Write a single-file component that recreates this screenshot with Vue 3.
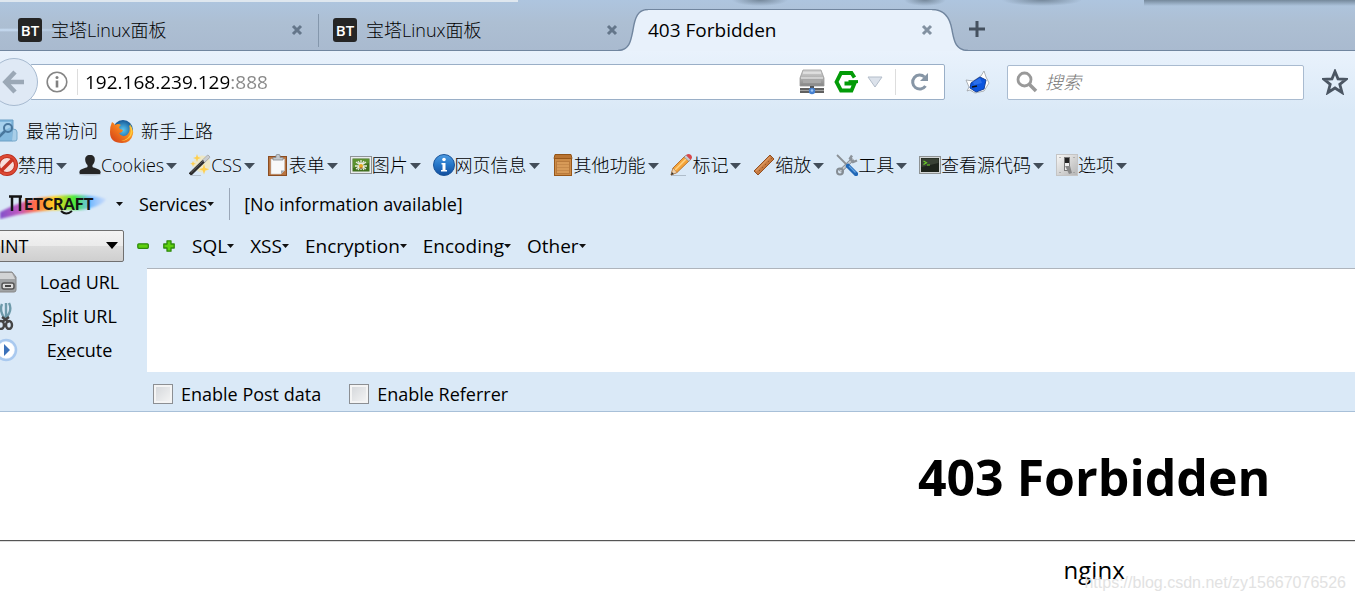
<script setup>
import { ref } from 'vue'

const address = ref('192.168.239.129:888')
const search = ref('')
const mode = ref('INT')
const payload = ref('')
const postData = ref(false)
const referrer = ref(false)

const tabs = ['宝塔Linux面板', '宝塔Linux面板']

const tools = [
  { label: '禁用', icon: '<circle cx="11" cy="11" r="9" fill="#f7dedb" stroke="#b72a1b" stroke-width="4"/><circle cx="11" cy="11" r="9" fill="none" stroke="#dd4a35" stroke-width="2.4"/><path d="M5 17 17 5" stroke="#c93423" stroke-width="3.6"/>' },
  { label: 'Cookies', icon: '<ellipse cx="11" cy="20.500" rx="11" ry="1" fill="#b9c5d1"/><path d="M11 1c3.500 0 5 2 4.800 5-.2 2.600-1.200 4-2.300 5v2c2 1.400 7.500 1.500 8 4.500.3 1.500 0 2.500-.8 2.500H1.300C.5 20 .200 19 .5 17.500 1 14.500 6.500 14.400 8.500 13v-2C7.400 10 6.400 8.600 6.200 6 6 3 7.500 1 11 1z" fill="#262626"/>' },
  { label: 'CSS', icon: '<circle cx="13" cy="10" r="8.500" fill="#ffe79a" opacity=".5"/><g fill="#ffcf4e"><path d="m8 0 1 3 3 1-3 1-1 3-1-3-3-1 3-1zM15 10l1.200 4 4 1.200-4 1.200-1.200 4-1.200-4-4-1.200 4-1.200zM4 7l.8 2 2 .8-2 .8L4 13l-.8-2.400-2-.8 2-.8z"/></g><path d="M1 20.500 20 2" stroke="#2d2d2d" stroke-width="3.400"/><path d="m14.500 7.300 5.500-5.300" stroke="#c9cdd1" stroke-width="3.400"/><path d="M2 18.500 15 6" stroke="#777" stroke-width=".7"/><path d="M2 21.500h10" stroke="#b6c2ce"/>' },
  { label: '表单', icon: '<rect x="1.500" y="2.500" width="18" height="19" fill="#b97440" stroke="#8a4d22"/><path d="M4 5h13.500v11.500L14 20H4z" fill="#f8f9fa" stroke="#c9c9c9" stroke-width=".6"/><path d="M17.500 16.500H14V20z" fill="#9fa5ab"/><path d="M6 6V3.500h3V1q2-1.500 4 0v2.500h3V6z" fill="#c3c8cd" stroke="#868b91" stroke-width=".8"/>' },
  { label: '图片', icon: '<rect x=".5" y="2.500" width="21" height="17" fill="#e9ebec" stroke="#8f9498"/><rect x="2.500" y="4.500" width="17" height="13" fill="#3f6f1c"/><path d="M3 5h16v4L3 14z" fill="#5c9130"/><g stroke="#e9eadf" stroke-width="1.300"><path d="m6 8 10 7M16 8 6 15M11 6v10M5 12h12M8 7l6 9M14 7l-6 9"/></g><circle cx="11" cy="12" r="2" fill="#e7aa20"/><path d="M9.500 14h3" stroke="#8c4f16"/>' },
  { label: '网页信息', icon: '<defs><linearGradient id="info" x1="0" y1="0" x2="0" y2="1"><stop stop-color="#4d9ce2"/><stop offset=".5" stop-color="#2475c7"/><stop offset="1" stop-color="#124d9c"/></linearGradient></defs><circle cx="11" cy="11" r="10.500" fill="url(#info)" stroke="#1a5499"/><circle cx="11" cy="5.500" r="1.800" fill="#fff"/><path d="M8.500 9h4v7h1.500v1.500H8V16h1.500v-5.500h-1z" fill="#fff"/>' },
  { label: '其他功能', icon: '<path d="M3 .5h16l1 4H2z" fill="#b87331" stroke="#935416"/><rect x="2.500" y="4.500" width="17" height="17" fill="#cb8b48" stroke="#985719"/><rect x="4.500" y="7.500" width="13" height="12" fill="#d79a58" stroke="#b97a3c"/><path d="M5 10.500h12M5 13.500h12M5 16.500h12" stroke="#c78a4b"/>' },
  { label: '标记', icon: '<path d="M1 21.500h15" stroke="#afbdca"/><path d="m1 21 2-7L15 2l5 4L7 18.500z" fill="#f4a43a" stroke="#a95f18" stroke-width=".8"/><path d="M5 16 17 4" stroke="#ffd282" stroke-width="1.600"/><path d="m3 14 4 4.500L1 21z" fill="#efd1ab" stroke="#9e6c3c" stroke-width=".5"/><path d="m1 21 .9-3 2 2z" fill="#333"/><path d="m14 3 2-2 5 4-2 2.500z" fill="#c7cbd0" stroke="#777" stroke-width=".5"/><path d="m16 1 2-1q4 0 4 4l-1.500 2z" fill="#d8484b"/>' },
  { label: '缩放', icon: '<path d="M1 17 17 1l4 4L5 21z" fill="#c67a40" stroke="#925022"/><path d="m3 17 14-14" stroke="#dc9860" stroke-width="1.400"/><path d="m7 17-1-1M10 14l-1-1M13 11l-1-1M16 8l-1-1M19 5l-1-1" stroke="#8d5028" stroke-width=".8"/>' },
  { label: '工具', icon: '<path d="M4 17.500 17 5" stroke="#7e858c" stroke-width="3.600"/><path d="M4 17.500 17 5" stroke="#c4c9ce" stroke-width="2"/><circle cx="4" cy="17.500" r="3" fill="none" stroke="#858c93" stroke-width="2"/><path d="M16 1.500 14 4.500l3 3.500 4-1.500" fill="none" stroke="#8c9299" stroke-width="2.400"/><path d="m1 1 11 11" stroke="#8b9096" stroke-width="1.800"/><path d="m12 12 8 8" stroke="#2168b7" stroke-width="4.500" stroke-linecap="round"/><path d="m13 12 6.500 6.500" stroke="#66a3e0" stroke-width="1.200"/>' },
  { label: '查看源代码', icon: '<rect x=".5" y="2.500" width="21" height="17" fill="#d3d6d6" stroke="#8e9394"/><rect x="2" y="4" width="18" height="14" fill="#1f251d"/><path d="M2.500 4.500H19.500V9l-17 4z" fill="#394135"/><path d="m4.500 7 3 1.800-3 1.800M8 11h3" fill="none" stroke="#6bd026" stroke-width="1.200"/>' },
  { label: '选项', icon: '<defs><linearGradient id="plate" x1="0" y1="0" x2="1" y2="1"><stop stop-color="#f8f8f7"/><stop offset="1" stop-color="#b4b4b4"/></linearGradient></defs><rect x=".5" y=".5" width="21" height="21" fill="url(#plate)" stroke="#c5c5c5"/><rect x="8.500" y="3.500" width="5" height="13" fill="#eee" stroke="#777"/><rect x="9" y="4" width="4" height="5" fill="#222"/><path d="M9 12h5l2 7-3 1z" fill="#888"/><path d="M4 3v1M18 3v1M4 18v1M18 18v1" stroke="#888"/>' }
]

const hackMenus = ['SQL', 'XSS', 'Encryption', 'Encoding', 'Other']
</script>

<template>
  <div class="browser">
    <header class="tabstrip">
      <div v-for="(tab, i) in tabs" :key="i" class="tab">
        <span class="favicon">BT</span>
        <span class="tab-title">{{ tab }}</span>
        <button class="close" aria-label="关闭标签页">
          <svg width="12" height="12" viewBox="0 0 12 12"><path d="m2 2 8 8M10 2l-8 8" stroke="#64768a" stroke-width="3" /></svg>
        </button>
      </div>
      <div class="active-tab">
        <svg class="cap" width="30" height="42" viewBox="0 0 30 42">
          <path d="M0 42C12 42 13 31 15 21 17 8 20 .5 30 .5V42z" fill="#e8f1fb" />
          <path d="M0 41.500C12 41 13 31 15 21 17 8 20 .5 30 .5" fill="none" stroke="#71869f" stroke-width="1.400" />
        </svg>
        <div class="active-body">
          <span class="tab-title">403 Forbidden</span>
          <button class="close" aria-label="关闭标签页">
            <svg width="12" height="12" viewBox="0 0 12 12"><path d="m2 2 8 8M10 2l-8 8" stroke="#8291a1" stroke-width="3" /></svg>
          </button>
        </div>
        <svg class="cap" width="36" height="42" viewBox="0 0 36 42">
          <path d="M36 42C23 42 22 31 20 21 18 8 12 .5 0 .5V42z" fill="#e8f1fb" />
          <path d="M36 41.500C23 41 22 31 20 21 18 8 12 .5 0 .5" fill="none" stroke="#71869f" stroke-width="1.400" />
        </svg>
      </div>
      <button class="new-tab" aria-label="新建标签页">
        <svg width="16" height="16" viewBox="0 0 16 16"><path d="M8 0v16M0 8h16" stroke="#45515f" stroke-width="3" /></svg>
      </button>
    </header>

    <div class="chrome">
      <nav class="navbar">
        <button class="back" aria-label="后退">
          <svg width="24" height="26" viewBox="0 0 24 26"><path d="M13 3 3.500 13 13 23M4 13h18" fill="none" stroke="#9ba8b6" stroke-width="4.600" /></svg>
        </button>
        <div class="urlbar">
          <svg class="identity" width="22" height="22" viewBox="0 0 22 22">
            <circle cx="11" cy="11" r="9.800" fill="none" stroke="#858585" stroke-width="1.600" />
            <circle cx="11" cy="6.500" r="1.500" fill="#808080" /><path d="M11 9.500v7" stroke="#808080" stroke-width="2.600" />
          </svg>
          <input v-model="address" class="address" aria-label="地址" />
          <svg width="26" height="26" viewBox="0 0 26 26">
            <defs><linearGradient id="drive" x1="0" y1="0" x2="0" y2="1"><stop stop-color="#d8d8d8" /><stop offset="1" stop-color="#858585" /></linearGradient></defs>
            <path d="M4 1h18l3 8v8H1V9z" fill="url(#drive)" stroke="#999" stroke-width=".8" />
            <path d="M4 4h18M2 9h22" stroke="#f2f2f2" /><rect x="4" y="11" width="18" height="3" fill="#a9a9a9" />
            <path d="M1 19h24v5H1z" fill="#606060" /><path d="M1 21.500h24" stroke="#a2a2a2" /><path d="M11 17h4v3h-4z" fill="#555" />
            <circle cx="13" cy="22" r="3.200" fill="#4681d2" /><circle cx="13" cy="21.500" r="1.300" fill="#9bc5f4" />
          </svg>
          <svg width="24" height="24" viewBox="0 0 24 24">
            <path d="M20.500 7.500 17.500 3H7L2.500 12 7 20.500h10.500L20.500 13.500H10.500" fill="none" stroke="#039b08" stroke-width="3.800" />
            <path d="M14.500 11.600h9.500" stroke="#039b08" stroke-width="3" />
          </svg>
          <svg class="history" width="16" height="12" viewBox="0 0 16 12"><path d="M1 1h14L8 11z" fill="#dce2eb" stroke="#b3bdca" /></svg>
          <button class="reload" aria-label="刷新">
            <svg width="20" height="20" viewBox="0 0 20 20"><path d="M14.500 5A7 7 0 1 0 15.500 14" fill="none" stroke="#8796a6" stroke-width="3" /><path d="M18 1v8h-8z" fill="#8796a6" /></svg>
          </button>
        </div>
        <button class="addon" aria-label="扩展">
          <svg width="26" height="24" viewBox="0 0 26 24">
            <path d="m2 10 7 1 8-5 3-5 2 6 3 6-5 8-9 2-5-3-3 1 2-4z" fill="#fff" stroke="#9a9fa4" stroke-width=".8" />
            <path d="m7 13 9-6 6 3-2 9-8 3-6-4z" fill="#0b55df" stroke="#123f9b" /><path d="m9 12 7-4 2 5-8 2z" fill="#2a6fec" /><path d="m8 17 5-1" stroke="#111" stroke-width="1.600" />
          </svg>
        </button>
        <label class="search">
          <svg width="22" height="22" viewBox="0 0 22 22"><circle cx="8.500" cy="8.500" r="6.500" fill="none" stroke="#999" stroke-width="2.800" /><path d="m13.500 13.500 6.500 6.500" stroke="#999" stroke-width="3.600" /></svg>
          <input v-model="search" placeholder="搜索" aria-label="搜索" />
        </label>
        <button class="star" aria-label="添加书签">
          <svg width="26" height="26" viewBox="0 0 26 26"><path d="m13 2.500 3 7.300 8 .5-6.200 5 2.200 8.200-7-4.500-7 4.500 2.200-8.200L2 10.300l8-.5z" fill="none" stroke="#4b5663" stroke-width="2.800" /></svg>
        </button>
      </nav>

      <div class="bookmarks">
        <a href="#">
          <svg width="24" height="24" viewBox="0 0 24 24"><path d="M1 2q0-1 1-1h17v20q0 1-1 1H2q-1 0-1-1z" fill="#83b9de" stroke="#6a9fc5" /><path d="M19 10q4 0 4 3v7q0 2-2 2h-3" fill="#a8cee8" stroke="#77a9cb" /><path d="M3 3h14v5L3 15z" fill="#a7d1ed" /><circle cx="14" cy="9" r="4" fill="none" stroke="#49779d" stroke-width="2" /><path d="m11 12-6 6" stroke="#49779d" stroke-width="2.500" /></svg>
          <span>最常访问</span>
        </a>
        <a href="#">
          <svg width="24" height="24" viewBox="0 0 24 24">
            <defs><radialGradient id="globe"><stop stop-color="#59c6f2" /><stop offset="1" stop-color="#145897" /></radialGradient><linearGradient id="fox" x1="1" y1="0" x2="0" y2="1"><stop stop-color="#ffd23c" /><stop offset=".5" stop-color="#f37a1d" /><stop offset="1" stop-color="#cf3917" /></linearGradient></defs>
            <circle cx="13" cy="11" r="10" fill="url(#globe)" />
            <path d="M2 3q2 1 3 3 3-2 6 0-3 2-1 4l3 1q-1 3-4 3 3 5 8 2 4-4 2-10 5 4 4 9-2 9-11 9Q0 24 0 13 0 7 2 3z" fill="url(#fox)" />
            <path d="M20 5q4 6 1 12-4 5-10 5 9-2 10-10z" fill="#ffcb3c" />
          </svg>
          <span>新手上路</span>
        </a>
      </div>

      <div class="devbar">
        <button v-for="tool in tools" :key="tool.label" class="tool">
          <svg width="22" height="22" viewBox="0 0 22 22" v-html="tool.icon"></svg>
          <span>{{ tool.label }}</span>
          <svg class="drop" width="11" height="7" viewBox="0 0 11 7"><path d="M0 1h11L5.500 7z" fill="#424d59" /></svg>
        </button>
      </div>

      <div class="netcraft">
        <button class="brand" aria-label="Netcraft">
          <svg width="110" height="32" viewBox="0 0 110 32">
            <defs><linearGradient id="rainbow"><stop stop-color="#8150ca" /><stop offset=".18" stop-color="#c05ac0" /><stop offset=".32" stop-color="#ff694b" /><stop offset=".52" stop-color="#ffd31d" /><stop offset=".7" stop-color="#48ea3a" /><stop offset=".85" stop-color="#72b9ff" /><stop offset="1" stop-color="#a6c4ff" stop-opacity=".4" /></linearGradient><filter id="soft"><feGaussianBlur stdDeviation="1" /></filter></defs>
            <path d="M0 24Q25 10 55 8 88 5 106 11 102 19 80 22 40 20 0 31z" fill="url(#rainbow)" filter="url(#soft)" />
            <path d="M9 8.500h13M12 8v15M20 8v15" fill="none" stroke="#151515" stroke-width="2.500" />
            <text x="24" y="22" font-family="Lato, sans-serif" font-size="16" font-weight="900" fill="#151515">ETCRAFT</text>
            <path d="M61 23q5 5 11 0" fill="none" stroke="#151515" stroke-width="2" />
          </svg>
          <svg width="7" height="4" viewBox="0 0 7 4"><path d="M0 0h7L3.500 4z" fill="#111" /></svg>
        </button>
        <button class="menu">Services<svg width="7" height="4" viewBox="0 0 7 4"><path d="M0 0h7L3.500 4z" fill="#111" /></svg></button>
        <span class="status">[No information available]</span>
      </div>

      <div class="hackbar">
        <div class="mode">
          <select v-model="mode" aria-label="类型"><option>INT</option></select>
          <svg width="12" height="7" viewBox="0 0 12 7"><path d="M0 0h12L6 7z" fill="#000" /></svg>
        </div>
        <button class="step" aria-label="减少"><svg width="12" height="12" viewBox="0 0 12 12"><rect x=".8" y="3.800" width="10.500" height="4.500" rx="1" fill="#5ed010" stroke="#2e8a0c" stroke-width="1.300" /></svg></button>
        <button class="step" aria-label="增加"><svg width="12" height="12" viewBox="0 0 12 12"><path d="M4 .8h4V4h3.200v4H8v3.200H4V8H.8V4H4z" fill="#5ed010" stroke="#2e8a0c" stroke-width="1.300" stroke-linejoin="round" /></svg></button>
        <div class="hack-menus">
          <button v-for="m in hackMenus" :key="m" class="menu">{{ m }}<svg width="7" height="4" viewBox="0 0 7 4"><path d="M0 0h7L3.500 4z" fill="#111" /></svg></button>
        </div>
      </div>

      <div class="editor">
        <div class="actions">
          <button>
            <svg width="26" height="24" viewBox="0 0 26 24"><path d="M5 2h15l4 5v13q0 2-2 2H4q-2 0-2-2V7z" fill="#a0a3a5" stroke="#888" /><path d="M5 3h15l3 6H3z" fill="#d2d4d5" /><rect x="10" y="13" width="12" height="6" rx="2" fill="#ddd" stroke="#555" stroke-width="1.500" /><path d="M13 16h6" stroke="#444" stroke-width="2" /></svg>
            <span>Lo<u>a</u>d URL</span>
          </button>
          <button>
            <svg width="26" height="28" viewBox="0 0 26 28"><path d="M10 2q-3 7 3 15M17 1q4 8-4 16M14 1v15" fill="none" stroke="#6e9aaa" stroke-width="2.400" /><path d="m10 15 7 5M17 15l-7 5" stroke="#444" stroke-width="2.500" /><ellipse cx="9" cy="23" rx="3" ry="4" fill="none" stroke="#454545" stroke-width="2.400" /><ellipse cx="17" cy="23" rx="3" ry="4" fill="none" stroke="#454545" stroke-width="2.400" /></svg>
            <span><u>S</u>plit URL</span>
          </button>
          <button>
            <svg width="26" height="24" viewBox="0 0 26 24"><circle cx="14" cy="12" r="10" fill="#f1f7fe" stroke="#a9c9ef" stroke-width="2.500" /><circle cx="14" cy="12" r="8" fill="#fff" /><path d="m12 6 6 6-6 6z" fill="#3d72ba" /></svg>
            <span>E<u>x</u>ecute</span>
          </button>
        </div>
        <textarea v-model="payload" aria-label="URL"></textarea>
      </div>

      <div class="options">
        <label><input v-model="postData" type="checkbox" /><span>Enable Post data</span></label>
        <label><input v-model="referrer" type="checkbox" /><span>Enable Referrer</span></label>
      </div>
    </div>

    <main class="page">
      <h1>403 Forbidden</h1>
      <hr />
      <p class="server">nginx</p>
      <span class="watermark">https://blog.csdn.net/zy15667076526</span>
    </main>
  </div>
</template>

<style>
body {
  background: #fff;
}
</style>

<style scoped>
.browser {
  overflow: hidden;
  font: 18px/24px "Open Sans", "Noto Sans CJK SC", sans-serif;
  color: #000;
}
button {
  display: flex;
  align-items: center;
  padding: 0;
  border: 0;
  background: none;
  font: inherit;
  color: inherit;
  white-space: nowrap;
}
input, textarea, select {
  font: inherit;
  color: inherit;
}
svg {
  display: block;
  flex: none;
}
.tabstrip {
  display: flex;
  height: 51px;
  box-sizing: border-box;
  border-bottom: 1px solid #71869f;
  background:
    linear-gradient(#dfe7ef, #dfe7ef) 0 0 / 518px 2px no-repeat,
    radial-gradient(closest-side, #75889b, transparent) 732px -6px / 56px 12px no-repeat,
    radial-gradient(closest-side, #75889b, transparent) 904px -6px / 42px 12px no-repeat,
    radial-gradient(closest-side, #75889b, transparent) 1002px -6px / 80px 12px no-repeat,
    linear-gradient(#75889b, transparent) 1144px 0 / 100% 6px no-repeat,
    radial-gradient(ellipse at 0 30px, #c9def5, transparent 90px),
    linear-gradient(#aec5df, #adbfd3 45%, #a9bacf);
}
.tab {
  display: flex;
  flex: none;
  align-items: center;
  box-sizing: border-box;
  width: 315px;
  padding: 12px 16px 2px 14px;
}
.tab:first-child {
  width: 319px;
  padding-left: 18px;
  padding-right: 15px;
  border-right: 1px solid #8497ac;
  border-image: linear-gradient(transparent 14px, #8497ac 14px, #8497ac 46px, transparent 46px) 1;
}
.favicon {
  width: 24px;
  margin-right: 9px;
  border-radius: 3px;
  background: #252525;
  color: #fff;
  font: 600 15px/24px "Open Sans", sans-serif;
  text-align: center;
}
.tab-title {
  flex: 1;
}
.tab .tab-title,
.bookmarks,
.tool,
.search {
  font-weight: 300;
}
.active-tab {
  display: flex;
  flex: none;
  width: 350px;
  height: 42px;
  margin: 9px 0 0 -16px;
}
.active-body {
  display: flex;
  flex: 1;
  align-items: center;
  box-sizing: border-box;
  padding-bottom: 1px;
  border-top: 1px solid #71869f;
  background: #e8f1fb;
  font-size: 19px;
}
.active-body .close {
  margin-right: -1px;
}
.new-tab {
  margin: 8px 0 0 1px;
}
.chrome {
  border-bottom: 1px solid #a8c0d8;
  background: linear-gradient(#e9f2fc, #dae9f7 60px);
}
.navbar {
  display: flex;
  align-items: center;
  height: 62px;
  padding-right: 7px;
}
.back {
  z-index: 1;
  flex: none;
  justify-content: center;
  width: 48px;
  height: 48px;
  margin-left: -10px;
  border: 1px solid #a7bad0;
  border-radius: 50%;
  background: #dfe9f5;
  box-sizing: border-box;
}
.urlbar {
  display: flex;
  flex: 1;
  align-items: center;
  box-sizing: border-box;
  height: 36px;
  margin-left: -8px;
  padding-left: 15px;
  border: 1px solid #9aafc7;
  border-radius: 2px;
  background: #fff;
}
.urlbar > svg + svg {
  margin-left: 9px;
}
.address {
  flex: 1;
  min-width: 0;
  height: 26px;
  margin-left: 9px;
  padding: 0 0 0 7px;
  border: 0;
  border-left: 1px solid #ddd;
  outline: 0;
  background: linear-gradient(90deg, #000 151px, #888 151px);
  background-clip: text;
  font-size: 19px;
  -webkit-text-fill-color: transparent;
}
.reload {
  height: 26px;
  margin-left: 12px;
  padding: 0 14px 0 14px;
  border-left: 1px solid #ddd;
}
.addon {
  margin: 0 17px 0 19px;
}
.search {
  display: flex;
  flex: none;
  align-items: center;
  gap: 7px;
  box-sizing: border-box;
  width: 297px;
  height: 35px;
  padding-left: 8px;
  border: 1px solid #a9bbd0;
  border-radius: 2px;
  background: #fff;
}
.search input {
  flex: 1;
  min-width: 0;
  padding: 0;
  border: 0;
  outline: 0;
}
.search input::placeholder {
  color: #777;
  font-style: italic;
}
.star {
  margin-left: 18px;
}
.bookmarks {
  display: flex;
  align-items: center;
  gap: 12px;
  height: 36px;
  margin-left: -6px;
}
.bookmarks a {
  display: flex;
  align-items: center;
  gap: 7px;
  color: #000;
  text-decoration: none;
}
.bookmarks a:first-child {
  gap: 8px;
}
.devbar {
  display: flex;
  align-items: center;
  justify-content: space-between;
  max-width: 1131px;
  height: 32px;
  margin-left: -4px;
}
.drop {
  margin-left: 2px;
}
.netcraft {
  display: flex;
  align-items: center;
  height: 45px;
}
.brand {
  gap: 6px;
  margin-right: 16px;
}
.status {
  margin-left: 15px;
  padding-left: 14px;
  border-left: 1px solid #9aa7b8;
  line-height: 32px;
}
.hackbar {
  display: flex;
  align-items: center;
  height: 39px;
}
.mode {
  position: relative;
  width: 124px;
  margin-right: 13px;
}
.mode select {
  display: block;
  width: 128px;
  height: 32px;
  margin-left: -4px;
  padding: 0 0 0 3px;
  appearance: none;
  border: 1px solid #707070;
  border-radius: 2px;
  background: linear-gradient(#f3f3f3, #ebebeb 50%, #dcdcdc 50%, #cfcfcf);
}
.mode svg {
  position: absolute;
  right: 6px;
  top: 12px;
  pointer-events: none;
}
.step {
  margin-right: 14px;
}
.hack-menus {
  display: flex;
  gap: 16px;
  margin-left: 3px;
  font-size: 19px;
}
.editor {
  display: flex;
  height: 108px;
}
.actions {
  display: grid;
  grid-template-rows: repeat(3, 34px);
  flex: none;
  width: 147px;
}
.actions button {
  margin-left: -8px;
}
.actions span {
  flex: 1;
  margin-right: 6px;
  text-align: center;
}
.actions u {
  text-underline-offset: 2px;
  text-decoration-thickness: 1px;
}
.editor textarea {
  flex: 1;
  height: 104px;
  box-sizing: border-box;
  margin: 3px 0 0;
  border: 0;
  border-top: 1px solid #aeb4bc;
  outline: 0;
  background: #fff;
  resize: none;
}
.options {
  display: flex;
  align-items: center;
  gap: 28px;
  height: 38px;
  padding: 0 0 0 153px;
}
.options label {
  display: flex;
  align-items: center;
  gap: 8px;
  padding-top: 4px;
}
.options input {
  width: 20px;
  height: 20px;
  margin: 0;
  appearance: none;
  border: 1px solid #8c8f93;
  background: linear-gradient(135deg, #d2d5d9, #f6f6f6);
  box-shadow: inset 0 0 0 2px #f4f4f4;
}
.page {
  position: relative;
  min-height: 189px;
}
.page h1 {
  margin: 0 0 0 61.5%;
  padding: 31px 0 29px;
  font-size: 50px;
  line-height: 68px;
  text-align: center;
}
.page hr {
  margin: 0;
  border: 0;
  border-top: 1px solid #555;
  border-bottom: 1px solid #ddd;
}
.server {
  margin: 11px 0 0 61.5%;
  font-size: 24px;
  line-height: 34px;
  text-align: center;
}
.watermark {
  position: absolute;
  right: 9px;
  bottom: 8px;
  color: #e2e2e2;
  font: 16px/20px "Liberation Sans", sans-serif;
}
</style>
